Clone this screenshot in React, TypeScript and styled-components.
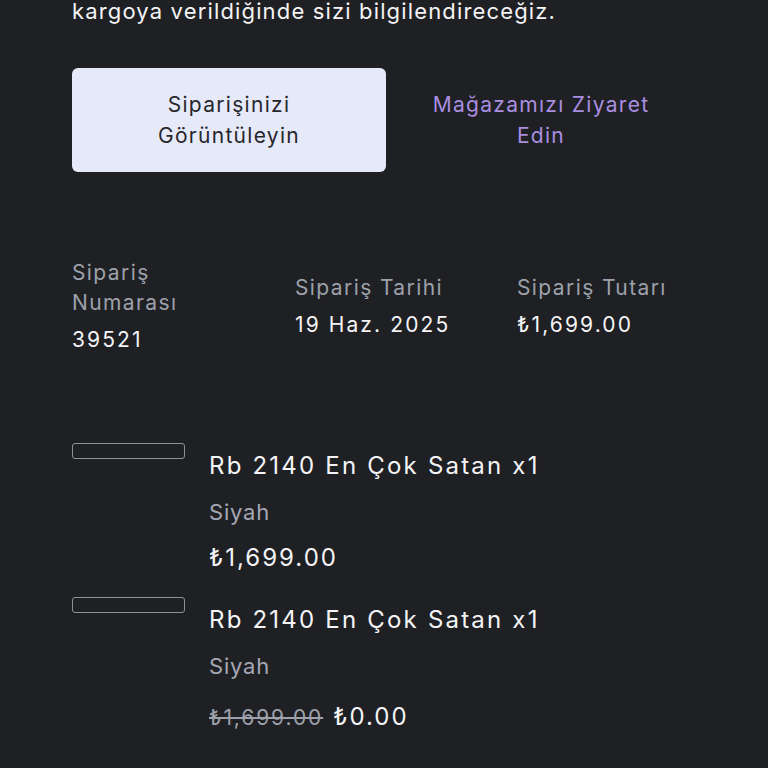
import styled, {createGlobalStyle} from 'styled-components';

const GlobalStyle = createGlobalStyle`
  html, body {
    margin: 0;
    padding: 0;
    background: #1f2024;
  }
  body {
    font-family: Inter, "Noto Sans", "Liberation Sans", sans-serif;
    color: #f4f4f6;
  }
`;

const Page = styled.div`
  width: 768px;
  height: 768px;
  overflow: hidden;
  background: #1f2024;
  padding: 0 72px;
  box-sizing: border-box;
`;

const Intro = styled.p`
  margin: -4px 0 0;
  font-size: 22px;
  line-height: 30px;
  letter-spacing: 1.15px;
  color: #f4f4f6;
`;

const Actions = styled.div`
  display: flex;
  align-items: center;
  margin-top: 42px;
`;

const PrimaryButton = styled.button`
  width: 314px;
  height: 104px;
  border: none;
  border-radius: 6px;
  background: #e6e9f8;
  color: #26272c;
  font-family: inherit;
  font-size: 21px;
  line-height: 31px;
  letter-spacing: 1.3px;
  padding: 0 40px;
`;

const LinkButton = styled.a`
  flex: 1;
  text-align: center;
  color: #a98ee0;
  font-size: 21px;
  line-height: 31px;
  letter-spacing: 1.3px;
  padding: 0 38px;
`;

const Summary = styled.div`
  display: grid;
  grid-template-columns: 223px 222px 1fr;
  align-items: center;
  margin-top: 86px;
`;

const SummaryCell = styled.div`
  display: flex;
  flex-direction: column;
  gap: 7px;
`;

const Label = styled.div`
  font-size: 21px;
  line-height: 30px;
  letter-spacing: 1.4px;
  color: #9da1ab;
  max-width: 150px;
`;

const Value = styled.div`
  font-size: 21px;
  line-height: 30px;
  letter-spacing: 2.1px;
  color: #f4f4f6;
`;

const Items = styled.div`
  display: flex;
  flex-direction: column;
  gap: 16px;
  margin-top: 88px;
`;

const Item = styled.div`
  display: flex;
  gap: 24px;
`;

const Thumb = styled.div`
  width: 113px;
  height: 16px;
  margin-top: 0;
  border: 1px solid #8d9098;
  border-radius: 3px;
  box-sizing: border-box;
  flex-shrink: 0;
`;

const ItemInfo = styled.div`
  display: flex;
  flex-direction: column;
`;

const ItemTitle = styled.div`
  font-size: 24px;
  line-height: 46px;
  letter-spacing: 2.2px;
  color: #f4f4f6;
`;

const ItemVariant = styled.div`
  font-size: 22px;
  line-height: 46px;
  letter-spacing: 0.8px;
  color: #a5a8b4;
`;

const ItemPrice = styled.div<{$discounted?: boolean}>`
  font-size: 24px;
  line-height: 46px;
  margin-top: ${(p) => (p.$discounted ? '5px' : '0')};
  letter-spacing: 2px;
  color: #f4f4f6;
  display: flex;
  align-items: baseline;
  gap: 10px;
`;

const OldPrice = styled.span`
  color: #9da1ab;
  font-size: 21px;
  letter-spacing: 1.9px;
  text-decoration: line-through;
`;

const items = [
  {title: 'Rb 2140 En Çok Satan x1', variant: 'Siyah', price: '₺1,699.00'},
  {title: 'Rb 2140 En Çok Satan x1', variant: 'Siyah', price: '₺0.00', old: '₺1,699.00'},
];

export default function App() {
  return (
    <>
      <GlobalStyle />
      <Page>
        <Intro>kargoya verildiğinde sizi bilgilendireceğiz.</Intro>
        <Actions>
          <PrimaryButton>Siparişinizi Görüntüleyin</PrimaryButton>
          <LinkButton>Mağazamızı Ziyaret Edin</LinkButton>
        </Actions>
        <Summary>
          <SummaryCell>
            <Label>Sipariş Numarası</Label>
            <Value>39521</Value>
          </SummaryCell>
          <SummaryCell>
            <Label>Sipariş Tarihi</Label>
            <Value>19 Haz. 2025</Value>
          </SummaryCell>
          <SummaryCell>
            <Label>Sipariş Tutarı</Label>
            <Value>₺1,699.00</Value>
          </SummaryCell>
        </Summary>
        <Items>
          {items.map((item, i) => (
            <Item key={i}>
              <Thumb />
              <ItemInfo>
                <ItemTitle>{item.title}</ItemTitle>
                <ItemVariant>{item.variant}</ItemVariant>
                <ItemPrice $discounted={!!item.old}>
                  {item.old && <OldPrice>{item.old}</OldPrice>}
                  <span>{item.price}</span>
                </ItemPrice>
              </ItemInfo>
            </Item>
          ))}
        </Items>
      </Page>
    </>
  );
}
